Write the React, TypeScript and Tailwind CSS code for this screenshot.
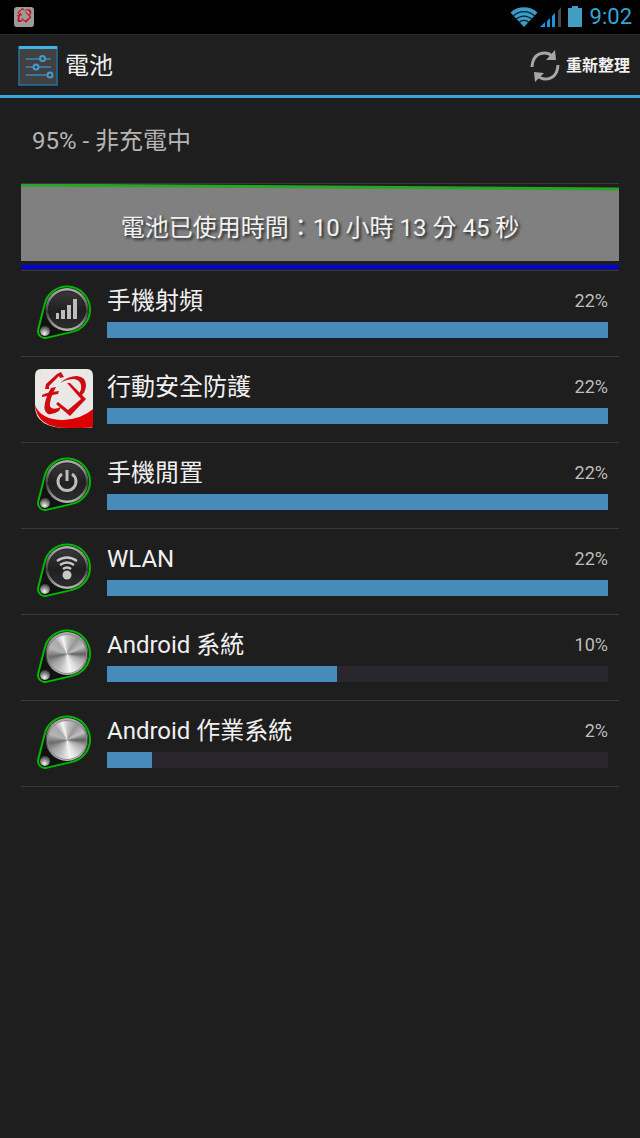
import { useId } from 'react'
import type { ReactNode } from 'react'

type IconKind = 'signal' | 'shield' | 'power' | 'wifi' | 'metal'

interface Usage {
  name: string
  percent: number
  bar: number
  icon: IconKind
}

const USAGES: Usage[] = [
  { name: '手機射頻', percent: 22, bar: 100, icon: 'signal' },
  { name: '行動安全防護', percent: 22, bar: 100, icon: 'shield' },
  { name: '手機閒置', percent: 22, bar: 100, icon: 'power' },
  { name: 'WLAN', percent: 22, bar: 100, icon: 'wifi' },
  { name: 'Android 系統', percent: 10, bar: 46, icon: 'metal' },
  { name: 'Android 作業系統', percent: 2, bar: 9, icon: 'metal' },
]

// 紅色標誌的線條，狀態列與清單共用
function BrandMark() {
  return (
    <g fill="#cf0a10">
      <path d="M11 20 L12 15 L23 5 L27 3 L30 8 L26 9 L25 7 L15 17 L15 20 Z" />
      <path d="M26 14 Q34 7 43 7 Q52 8 52 16 Q52 23 46 28 L44 26 Q48 21 47 16 Q46 11 40 10 Q33 10 26 14 Z" />
      <path d="M8 26 Q13 23 25 22 L24 25 L8 28 Z" />
      <path d="M17 19 L22 18 Q15 31 16 37 Q18 42 27 38 L25 42 Q19 46 14 45 Q9 42 11 34 Q12 28 17 19 Z" />
      <path d="M33 14 L36 14 L52 30 L36 47 L22 35 L24 33 L34 41 L47 30 Z" />
    </g>
  )
}

function ShieldIcon() {
  return (
    <svg viewBox="0 0 60 60" className="size-15" aria-hidden="true">
      <path d="M8 0 H54 Q60 0 60 7 V58 Q58 59 50 59 H35 Q2 59 2 37 V7 Q2 0 8 0 Z" fill="#e9e8e7" />
      <path d="M2 36 Q8 51 30 51 Q49 50 60 40 V58 Q55 59 50 59 H35 Q4 59 2 36 Z" fill="#dc0000" />
      <g transform="translate(1 0)">
        <BrandMark />
      </g>
    </svg>
  )
}

function Glyph({ kind }: { kind: IconKind }) {
  if (kind === 'signal') {
    return (
      <g fill="#bdbdbd">
        <rect x="23" y="30" width="3" height="6" />
        <rect x="28" y="27" width="4" height="9" />
        <rect x="34" y="22" width="4" height="14" />
        <rect x="40" y="16" width="4" height="20" />
      </g>
    )
  }
  if (kind === 'power') {
    return (
      <g fill="none" stroke="#bdbdbd" strokeWidth="3">
        <path d="M29 19 A9 9 0 1 0 39 19" />
        <path d="M34 15 V26" />
      </g>
    )
  }
  return (
    <g fill="none" stroke="#c8c8c8" strokeWidth="2.5">
      <path d="M24 20 Q34 13 44 20" />
      <path d="M27 24 Q34 19 41 24" />
      <path d="M30 28 Q34 25 38 28" />
      <circle cx="34" cy="34" r="4.500" fill="#c8c8c8" stroke="none" />
    </g>
  )
}

function KnobIcon({ kind }: { kind: IconKind }) {
  const id = useId()
  const metal = kind === 'metal'
  return (
    <svg viewBox="0 0 60 60" className="size-15" aria-hidden="true">
      <defs>
        <linearGradient id={`${id}rim`} x1="0" y1="0" x2="0" y2="1">
          <stop offset="0" stopColor="#b4b4b4" />
          <stop offset="0.25" stopColor="#858585" />
          <stop offset="0.55" stopColor="#3c3c3c" />
          <stop offset="0.8" stopColor="#858585" />
          <stop offset="1" stopColor="#bdbdbd" />
        </linearGradient>
        <linearGradient id={`${id}face`} x1="0" y1="0" x2="0" y2="1">
          <stop offset="0" stopColor="#383838" />
          <stop offset="0.55" stopColor="#202020" />
          <stop offset="1" stopColor="#2c2c2c" />
        </linearGradient>
        <radialGradient id={`${id}ball`} cx="0.45" cy="0.75" r="0.7">
          <stop offset="0" stopColor="#f5f5f5" />
          <stop offset="0.5" stopColor="#999999" />
          <stop offset="1" stopColor="#444444" />
        </radialGradient>
      </defs>
      <path
        d="M11.500 21.700 A23 23 0 1 1 38.300 49.100 L13.300 54.900 A7 7 0 0 1 5.200 46.500 Z"
        fill="#121212"
        stroke="#00b800"
        strokeWidth="2"
        strokeLinejoin="round"
      />
      <circle cx="34" cy="26.500" r="21.500" fill={`url(#${id}rim)`} />
      {metal ? (
        <>
          <foreignObject x="14" y="7" width="40" height="40">
            <div className="size-10 rounded-full bg-[conic-gradient(from_0deg,#c8c8c8,#969696_35deg,#c0c0c0_65deg,#606060_90deg,#a8a8a8_110deg,#dadada_145deg,#f4f4f4_170deg,#c0c0c0_205deg,#a0a0a0_235deg,#6c6c6c_260deg,#b5b5b5_290deg,#aaaaaa_320deg,#f4f4f4_345deg,#c8c8c8)]" />
          </foreignObject>
          <circle cx="34" cy="27" r="19.500" fill="none" stroke="#8a8a8a" />
        </>
      ) : (
        <>
          <circle cx="34" cy="26.500" r="18.500" fill={`url(#${id}face)`} stroke="#1c1c1c" />
          <Glyph kind={kind} />
        </>
      )}
      <circle cx="12" cy="48" r="5" fill={`url(#${id}ball)`} />
    </svg>
  )
}

function StatusBar() {
  return (
    <div className="flex h-[34px] items-center justify-between bg-black pr-2 pl-3.5">
      <svg viewBox="0 0 60 60" className="size-5" aria-hidden="true">
        <rect width="60" height="60" rx="10" fill="#9b9b9b" />
        <BrandMark />
      </svg>
      <div className="flex items-center">
        <svg viewBox="0 0 28 22" className="mr-0.5 h-[22px] w-7" aria-hidden="true">
          <path d="M14 21 L0.500 6.500 A20 20 0 0 1 27.500 6.500 Z" fill="#3b9cc6" />
          <path
            d="M3 10.500 A15 15 0 0 1 25 10.500 M6 13.500 A11 11 0 0 1 22 13.500 M9 16.500 A7 7 0 0 1 19 16.500"
            fill="none"
            stroke="#06202c"
            strokeWidth="1.300"
          />
        </svg>
        <svg viewBox="0 0 22 22" className="mr-1.5 h-[22px] w-[22px]" aria-hidden="true">
          <path d="M0 21 L5 16 V21 Z M7 15 L10 12 V21 H7 Z M12 10 L15 7 V21 H12 Z" fill="#1297e0" />
          <path d="M18 5 L21 1 V21 H18 Z" fill="#484848" />
        </svg>
        <svg viewBox="0 0 14 22" className="mr-2 h-[22px] w-3.5" aria-hidden="true">
          <path d="M4 0 H10 V2 H14 V21 H0 V2 H4 Z" fill="#429cc4" />
        </svg>
        <span className="text-[22px] leading-[34px] text-[#33a5d6]">9:02</span>
      </div>
    </div>
  )
}

function SettingsIcon() {
  return (
    <svg viewBox="0 0 40 40" className="size-10" aria-hidden="true">
      <rect x="1" y="1" width="38" height="38" fill="#414141" stroke="#286f9d" strokeWidth="1.500" />
      <rect x="1" y="0" width="38" height="3" fill="#42b4e8" />
      <g stroke="#3887ba" strokeWidth="1.500" fill="none">
        <path d="M8 13 H22 M27 13 H33 M8 21 H15 M21 21 H33 M8 29 H29" />
        <g strokeWidth="2" stroke="#439bd0">
          <circle cx="24.500" cy="12.500" r="2.500" />
          <circle cx="18" cy="21" r="2.500" />
          <circle cx="32" cy="29" r="2.500" />
        </g>
      </g>
    </svg>
  )
}

function RefreshIcon() {
  return (
    <svg viewBox="0 0 30 32" className="h-8 w-[30px]" aria-hidden="true">
      <path d="M2 17 Q3 3 15 3 Q19 3 22 6 M28 15 Q27 29 15 29 Q11 29 8 26" fill="none" stroke="#a6a6a6" strokeWidth="3" />
      <path d="M25 0 L26 10 H16 Z M4 22 L14 23 L5 32 Z" fill="#a6a6a6" />
    </svg>
  )
}

function ActionBar() {
  return (
    <header className="flex h-16 items-center justify-between border-t border-b-3 border-t-[#292929] border-b-[#33a9dc] bg-[#202020] pt-0.5 pr-2.5 pl-[18px]">
      <div className="flex items-center gap-[7px]">
        <SettingsIcon />
        <h1 className="text-2xl text-[#f0f0f0]">電池</h1>
      </div>
      <button type="button" className="flex items-center gap-1.5 text-base font-bold text-[#f0f0f0]">
        <RefreshIcon />
        重新整理
      </button>
    </header>
  )
}

function BatteryChart({ children }: { children: ReactNode }) {
  return (
    <section className="grid h-[88px] border-t border-b border-[#3a3a3a]">
      <svg viewBox="0 0 598 86" preserveAspectRatio="none" className="col-start-1 row-start-1 h-[86px] w-full" aria-hidden="true">
        <path d="M0 1 L598 5 V77 H0 Z" fill="#808080" />
        <path d="M0 1 L598 5" stroke="#26a526" strokeWidth="3" />
        <rect y="81" width="598" height="4" fill="#0000e0" />
      </svg>
      <p className="col-start-1 row-start-1 pt-6 text-center text-2xl leading-10 text-[#f2f2f2] [text-shadow:2px_2px_3px_#222]">
        {children}
      </p>
    </section>
  )
}

function UsageRow({ usage }: { usage: Usage }) {
  return (
    <li className="flex h-[86px] border-b border-[#3a3a3a] pt-3 pr-[11px] pl-3">
      {usage.icon === 'shield' ? <ShieldIcon /> : <KnobIcon kind={usage.icon} />}
      <div className="ml-3.5 min-w-0 flex-1">
        <div className="flex h-[39px] items-center justify-between pb-1">
          <span className="text-2xl text-[#f0f0f0]">{usage.name}</span>
          <span className="text-lg text-[#bdbdbd]">{usage.percent}%</span>
        </div>
        <div className="h-4 bg-[#29262d]">
          <div className="h-full bg-[#468bb9]" style={{ width: `${usage.bar}%` }} />
        </div>
      </div>
    </li>
  )
}

export default function App() {
  return (
    <div className="flex min-h-screen flex-col bg-[#1e1e1e] font-[Roboto,'Noto_Sans_CJK_TC',sans-serif]">
      <StatusBar />
      <ActionBar />
      <main className="px-[21px]">
        <p className="h-[85px] px-[11px] text-2xl leading-[86px] text-[#b5b5b5]">95% - 非充電中</p>
        <BatteryChart>電池已使用時間：10 小時 13 分 45 秒</BatteryChart>
        <ul>
          {USAGES.map((usage) => (
            <UsageRow key={usage.name} usage={usage} />
          ))}
        </ul>
      </main>
    </div>
  )
}
